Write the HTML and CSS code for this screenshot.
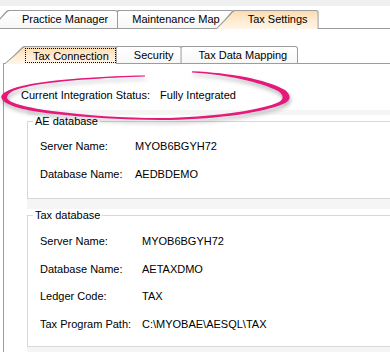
FILE: index.html
```html
<!DOCTYPE html>
<html lang="en">

<head>
    <meta charset="UTF-8">
    <meta name="viewport" content="width=device-width, initial-scale=1.0">
    <title>Tax Settings</title>
    <link rel="stylesheet" href="styles.css">
</head>

<body>
    <div class="topbar"></div>

    <div class="tabstrip outer">
        <div class="tab">Practice Manager</div>
        <div class="tab">Maintenance Map</div>
        <div class="tab active">Tax Settings</div>
    </div>

    <div class="page">
        <div class="tabstrip inner">
            <div class="tab active"><span class="focus">Tax Connection</span></div>
            <div class="tab">Security</div>
            <div class="tab">Tax Data Mapping</div>
        </div>

        <div class="panel">
            <div class="status">
                <span class="status-label">Current Integration Status:</span>
                <span>Fully Integrated</span>
            </div>

            <div class="groups">
                <div class="group-box">
                    <fieldset class="group ae">
                        <legend>AE database</legend>
                        <div class="fields">
                            <span>Server Name:</span><span>MYOB6BGYH72</span>
                            <span>Database Name:</span><span>AEDBDEMO</span>
                        </div>
                    </fieldset>
                </div>

                <div class="group-box">
                    <fieldset class="group tax">
                        <legend>Tax database</legend>
                        <div class="fields">
                            <span>Server Name:</span><span>MYOB6BGYH72</span>
                            <span>Database Name:</span><span>AETAXDMO</span>
                            <span>Ledger Code:</span><span>TAX</span>
                            <span>Tax Program Path:</span><span>C:\MYOBAE\AESQL\TAX</span>
                        </div>
                    </fieldset>
                </div>
            </div>
        </div>
    </div>

    <!-- hand drawn highlight round the status line -->
    <svg class="highlight" width="390" height="352" viewBox="0 0 390 352">
        <path d="M145,75.5 C110,76 50,79 22,86 C5,90 0,95 1.5,98 C3,104 20,110 50,113.5 C90,118 130,120.5 170,120
                 C220,119 265,112 283,104 C292,100 291,95 285,90 C265,79 230,73 192,71.3
                 L192,72.6 C228,75 260,82 278,91 C284,95 284,99 279,102 C262,110 220,116 170,118
                 C130,118.5 90,116 52,111 C22,107 8,102 7,98 C7,94 12,90 24,87.5 C50,81 110,77.5 145,76.6 Z"
              fill="#e5197a"/>
    </svg>
</body>

</html>
```

FILE: styles.css
```css
:root {
    --tab-border: #9c9c9c;
    --group-border: #d8d8d8;
    --tab-active: linear-gradient(#fcdcae 0%, #feecd3 55%, #fff5e8 100%);
}

body {
    margin: 0;
    width: 390px;
    height: 352px;
    overflow: hidden;
    position: relative;
    background: #fff;
    color: #000;
    font-family: "Liberation Sans", Arial, sans-serif;
    font-size: 11px;
}

.topbar {
    height: 6px;
    background: #f0f0f0;
}

/* Tab strips */
.tabstrip {
    display: flex;
    align-items: flex-start;
    border-bottom: 1px solid var(--tab-border);
}

.tabstrip.outer {
    margin-top: 4px;
}

.tab {
    position: relative;
    display: flex;
    align-items: flex-start;
    white-space: nowrap;
}

.tab::before,
.tab::after {
    content: "";
    position: absolute;
    z-index: -1;
    clip-path: polygon(0 100%, calc(var(--s) * 0.5) 50%, calc(var(--s) * 0.75) 22%, calc(var(--s) * 0.9) 6%, var(--s) 0, 100% 0, 100% 100%);
}

.tab::before {
    inset: 0;
    background: var(--tab-border);
    border-top-right-radius: 3px;
}

.tab::after {
    top: 1px;
    left: 1.2px;
    right: 1px;
    bottom: 0;
    background: linear-gradient(#fff, #f7f7f7);
    border-top-right-radius: 2px;
}

.tab:nth-child(1) { z-index: 3; }
.tab:nth-child(2) { z-index: 2; }
.tab:nth-child(3) { z-index: 1; }

.tab.active {
    z-index: 5;
    margin-bottom: -1px;
}

.tab.active::after {
    background: var(--tab-active);
}

.outer .tab {
    --s: 18px;
    height: 18px;
    line-height: 18px;
    margin-left: -18px;
    padding: 0 14px 0 32px;
}

.outer .tab:first-child {
    margin-left: -10px;
    padding-right: 10px;
}

.outer .tab.active {
    height: 19px;
    padding-right: 11px;
}

.inner {
    margin: 17px 0 0 3px;
}

.inner .tab {
    --s: 20px;
    height: 17px;
    line-height: 18px;
    margin-left: -20px;
    padding: 0 8px 0 37px;
}

.inner .tab:first-child {
    margin-left: 1px;
    padding: 0 1px 0 21px;
}

.inner .tab:last-child {
    padding-right: 11px;
}

.inner .tab.active {
    height: 18px;
}

.focus {
    box-sizing: border-box;
    height: 15px;
    line-height: 14px;
    margin-top: 2px;
    padding: 0 6px 0 7px;
    border: 1px dotted #000;
}

/* Tab page */
.panel {
    margin-left: 3px;
    height: 300px;
    padding: 25px 0 0 17px;
    border-left: 1px solid var(--tab-border);
    background: #fff;
}

.status {
    line-height: 13px;
}

.status-label {
    display: inline-block;
    width: 136px;
}

.groups {
    margin: 8px 0 0 6px;
    padding: 5px 0 10px;
    background: #f5f5f5;
}

.group-box {
    width: 400px;
    background: #fff;
}

.group-box + .group-box {
    margin-top: 10.5px;
}

.group {
    margin: 0;
    padding: 5px 0 9.5px 12px;
    border: 1px solid var(--group-border);
}

.group legend {
    margin-left: -7px;
    padding: 0 2px;
    line-height: 13px;
}

.group.tax {
    padding-top: 5.5px;
    padding-bottom: 7px;
}

.fields {
    display: grid;
    grid-template-columns: 95px auto;
    line-height: 27.7px;
}

.tax .fields {
    grid-template-columns: 102px auto;
}

/* Highlight drawn over the page */
.highlight {
    position: absolute;
    left: 0;
    top: 0;
    pointer-events: none;
    filter: drop-shadow(1px 3px 2px rgba(0, 0, 0, 0.3));
}
```
